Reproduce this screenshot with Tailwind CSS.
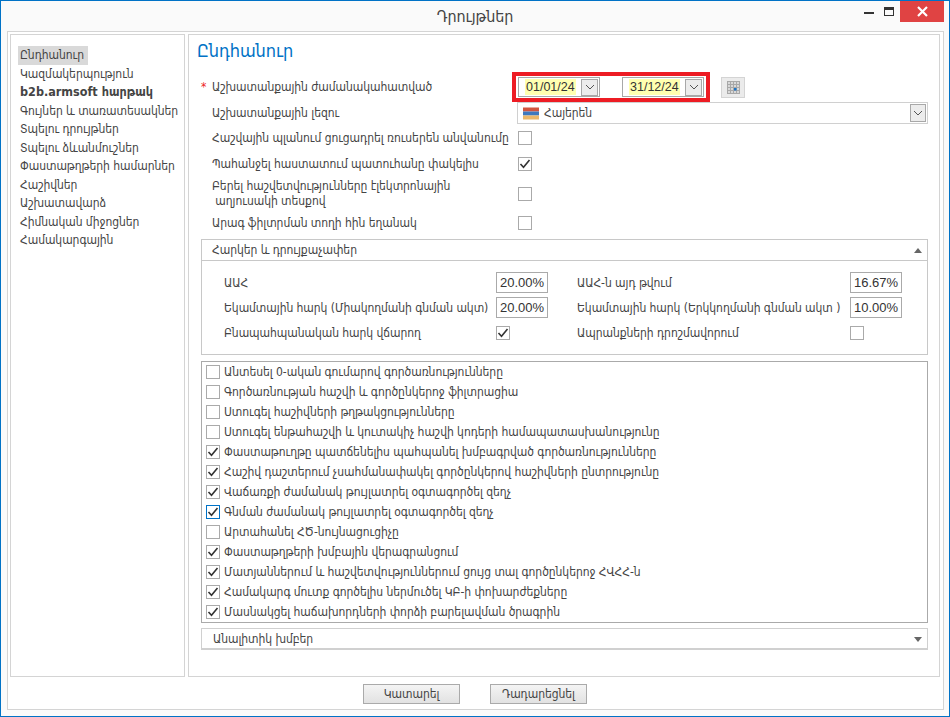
<!DOCTYPE html>
<html lang="hy">
<head>
<meta charset="UTF-8" />
<title>Դրույթներ</title>
<script src="https://cdn.jsdelivr.net/npm/@tailwindcss/browser@4"></script>
</head>
<body class="bg-white">
<div class="w-[950px] h-[717px] box-border border border-[#0072c6] bg-[#fafafa] overflow-hidden font-['DejaVu_Sans_Condensed','DejaVu_Sans',sans-serif] font-stretch-condensed text-[12px] tracking-[-0.06px] text-[#444]">

  <!-- title bar -->
  <div class="relative h-[30px] flex items-center justify-center pt-[1px] text-[16px] text-[#444]">
    <span>Դրույթներ</span>
    <div class="absolute right-[5px] top-0 flex items-start">
      <div class="w-[10px] h-[2px] bg-[#333] mt-[11px] mr-[10px]"></div>
      <div class="w-[10px] h-[9px] box-border border border-t-[3px] border-[#333] mt-[6px] mr-[6px]"></div>
      <div class="w-[44px] h-[21px] bg-[#e04343] flex items-center justify-center">
        <svg width="11" height="11" viewBox="0 0 11 11"><path d="M1 1l9 9M10 1l-9 9" stroke="#fff" stroke-width="2.2" fill="none"/></svg>
      </div>
    </div>
  </div>

  <!-- outer panel -->
  <div class="ml-[6px] w-[937px] h-[679px] box-border border border-[#d4d4d4] bg-white p-[2px]">
    <div class="flex gap-[3px] h-[643px]">

      <!-- sidebar -->
      <div class="w-[175px] box-border border border-[#d4d4d4] pl-[7px] pt-[11px] leading-[18.5px]">
        <div class="w-[70px] bg-[#d9d9d9] pl-[2px]">Ընդհանուր</div>
        <div class="pl-[2px]">Կազմակերպություն</div>
        <div class="pl-[2px] font-bold text-[12.5px] tracking-normal">b2b.armsoft հարթակ</div>
        <div class="pl-[2px]">Գույներ և տառատեսակներ</div>
        <div class="pl-[2px]">Տպելու դրույթներ</div>
        <div class="pl-[2px]">Տպելու ձևանմուշներ</div>
        <div class="pl-[2px]">Փաստաթղթերի համարներ</div>
        <div class="pl-[2px]">Հաշիվներ</div>
        <div class="pl-[2px]">Աշխատավարձ</div>
        <div class="pl-[2px]">Հիմնական միջոցներ</div>
        <div class="pl-[2px]">Համակարգային</div>
      </div>

      <!-- main -->
      <div class="w-[752px] box-border border border-[#d4d4d4] pl-[12px]">
        <div class="h-[22px] mt-[5px] mb-[10px] -ml-[4px] text-[18px] leading-[22px] text-[#0072c6]">Ընդհանուր</div>

        <div class="flex h-[30px]">
          <div class="w-[316px] flex items-center"><span class="w-[11px] text-[#ed1c24]">*</span><span>Աշխատանքային ժամանակահատված</span></div>
          <div class="-ml-[5px] w-[198px] box-border border-[4px] border-[#ed1c24] flex items-center px-[2px] justify-between">
            <div class="w-[82px] h-[20px] box-border border border-[#a8a8a8] flex items-center justify-between pl-[6px] pr-[1px]">
              <span class="bg-[#ffffb0] px-[1px] leading-[16px] font-['Liberation_Sans',sans-serif] font-stretch-normal tracking-normal text-[12.5px] text-[#333]">01/01/24</span>
              <div class="w-[17px] h-[17px] box-border border border-[#a8a8a8] bg-[#ececec] flex items-center justify-center">
                <svg width="10" height="7" viewBox="0 0 10 7"><path d="M1 1l4 4 4-4" stroke="#555" fill="none"/></svg>
              </div>
            </div>
            <div class="w-[82px] h-[20px] box-border border border-[#a8a8a8] flex items-center justify-between pl-[6px] pr-[1px]">
              <span class="bg-[#ffffb0] px-[1px] leading-[16px] font-['Liberation_Sans',sans-serif] font-stretch-normal tracking-normal text-[12.5px] text-[#333]">31/12/24</span>
              <div class="w-[17px] h-[17px] box-border border border-[#a8a8a8] bg-[#ececec] flex items-center justify-center">
                <svg width="10" height="7" viewBox="0 0 10 7"><path d="M1 1l4 4 4-4" stroke="#555" fill="none"/></svg>
              </div>
            </div>
          </div>
          <div class="ml-[11px] mt-[5px] w-[24px] h-[21px] box-border border border-[#d4d4d4] bg-[#ebebeb] flex items-center justify-center">
            <svg width="13" height="13" viewBox="0 0 13 13">
              <rect width="13" height="13" fill="#d8d8d8"/>
              <path d="M0.5 0v13M3.5 0v13M6.5 0v13M9.5 0v13M12.5 0v13M0 0.5h13M0 3.5h13M0 6.5h13M0 9.5h13M0 12.5h13" stroke="#a8a8a8"/>
              <rect x="7" y="7" width="2.5" height="2.5" fill="#1a75c9"/>
            </svg>
          </div>
        </div>

        <div class="flex h-[22px]">
          <div class="w-[316px] pl-[11px] flex items-center">Աշխատանքային լեզու</div>
          <div class="w-[411px] box-border border border-[#d0d0d0] flex items-center pl-[5px] pr-[1px]">
            <svg width="16" height="13" viewBox="0 0 16 12" class="mr-[5px]"><rect width="16" height="4" fill="#d1553f"/><rect y="4" width="16" height="4" fill="#3f78bd"/><rect y="8" width="16" height="4" fill="#ecb768"/></svg>
            <span>Հայերեն</span>
            <div class="ml-auto w-[16px] h-[18px] box-border border border-[#a8a8a8] bg-[#ececec] flex items-center justify-center">
              <svg width="10" height="7" viewBox="0 0 10 7"><path d="M1 1l4 4 4-4" stroke="#555" fill="none"/></svg>
            </div>
          </div>
        </div>

        <div class="flex items-center h-[24px] mt-[2px]">
          <div class="w-[317px] pl-[11px]">Հաշվային պլանում ցուցադրել ռուսերեն անվանումը</div>
          <div class="w-[14px] h-[14px] box-border border border-[#aaa]"></div>
        </div>
        <div class="flex items-center h-[24px] mt-[2px]">
          <div class="w-[317px] pl-[11px]">Պահանջել հաստատում պատուհանը փակելիս</div>
          <div class="w-[14px] h-[14px] box-border border border-[#aaa] flex items-center justify-center">
            <svg width="12" height="10" viewBox="0 0 12 10"><path d="M1.5 5l3 3.2L10.5 1" stroke="#333" stroke-width="1.6" fill="none"/></svg>
          </div>
        </div>
        <div class="flex items-center h-[34px] mt-[1px]">
          <div class="w-[317px] pl-[11px] leading-[15px]">Բերել հաշվետվությունները էլեկտրոնային<br />&nbsp;աղյուսակի տեսքով</div>
          <div class="w-[14px] h-[14px] box-border border border-[#aaa]"></div>
        </div>
        <div class="flex items-center h-[22px] mt-[1px]">
          <div class="w-[317px] pl-[11px]">Արագ ֆիլտրման տողի հին եղանակ</div>
          <div class="w-[14px] h-[14px] box-border border border-[#aaa]"></div>
        </div>

        <!-- tax panel -->
        <div class="mt-[5px] w-[727px] h-[116px] box-border border border-[#c8c8c8]">
          <div class="h-[21px] box-border border-b border-[#c8c8c8] flex items-center justify-between pl-[10px] pr-[5px]">
            <span>Հարկեր և դրույքաչափեր</span>
            <div class="w-0 h-0 border-x-[4px] border-x-transparent border-b-[5px] border-b-[#666]"></div>
          </div>
          <div class="grid grid-cols-[272px_81px_273px_52px] auto-rows-[21px] gap-y-[4px] pl-[22px] pt-[11px] items-center">
            <div>ԱԱՀ</div>
            <div class="col-start-2 w-[52px] h-[21px] box-border border border-[#aaa] flex items-center justify-center font-['Liberation_Sans',sans-serif] font-stretch-normal tracking-normal text-[13px] text-[#333]">20.00%</div>
            <div>ԱԱՀ-ն այդ թվում</div>
            <div class="w-[52px] h-[21px] box-border border border-[#aaa] flex items-center justify-center font-['Liberation_Sans',sans-serif] font-stretch-normal tracking-normal text-[13px] text-[#333]">16.67%</div>
            <div>Եկամտային հարկ (Միակողմանի գնման ակտ)</div>
            <div class="w-[52px] h-[21px] box-border border border-[#aaa] flex items-center justify-center font-['Liberation_Sans',sans-serif] font-stretch-normal tracking-normal text-[13px] text-[#333]">20.00%</div>
            <div>Եկամտային հարկ (Երկկողմանի գնման ակտ )</div>
            <div class="w-[52px] h-[21px] box-border border border-[#aaa] flex items-center justify-center font-['Liberation_Sans',sans-serif] font-stretch-normal tracking-normal text-[13px] text-[#333]">10.00%</div>
            <div>Բնապահպանական հարկ վճարող</div>
            <div class="w-[14px] h-[14px] box-border border border-[#aaa] flex items-center justify-center">
              <svg width="12" height="10" viewBox="0 0 12 10"><path d="M1.5 5l3 3.2L10.5 1" stroke="#333" stroke-width="1.6" fill="none"/></svg>
            </div>
            <div>Ապրանքների դրոշմավորում</div>
            <div class="w-[14px] h-[14px] box-border border border-[#aaa]"></div>
          </div>
        </div>

        <!-- options list -->
        <div class="mt-[6px] w-[727px] h-[262px] box-border border border-[#aaa] pl-[4px] leading-[20px]">
          <div class="flex items-center gap-[4px] h-[20px]"><div class="w-[14px] h-[14px] box-border border border-[#aaa]"></div><span>Անտեսել 0-ական գումարով գործառնությունները</span></div>
          <div class="flex items-center gap-[4px] h-[20px]"><div class="w-[14px] h-[14px] box-border border border-[#aaa]"></div><span>Գործառնության հաշվի և գործընկերոջ ֆիլտրացիա</span></div>
          <div class="flex items-center gap-[4px] h-[20px]"><div class="w-[14px] h-[14px] box-border border border-[#aaa]"></div><span>Ստուգել հաշիվների թղթակցությունները</span></div>
          <div class="flex items-center gap-[4px] h-[20px]"><div class="w-[14px] h-[14px] box-border border border-[#aaa]"></div><span>Ստուգել ենթահաշվի և կուտակիչ հաշվի կոդերի համապատասխանությունը</span></div>
          <div class="flex items-center gap-[4px] h-[20px]"><div class="w-[14px] h-[14px] box-border border border-[#aaa] flex items-center justify-center"><svg width="12" height="10" viewBox="0 0 12 10"><path d="M1.5 5l3 3.2L10.5 1" stroke="#333" stroke-width="1.6" fill="none"/></svg></div><span>Փաստաթուղթը պատճենելիս պահպանել խմբագրված գործառնությունները</span></div>
          <div class="flex items-center gap-[4px] h-[20px]"><div class="w-[14px] h-[14px] box-border border border-[#aaa] flex items-center justify-center"><svg width="12" height="10" viewBox="0 0 12 10"><path d="M1.5 5l3 3.2L10.5 1" stroke="#333" stroke-width="1.6" fill="none"/></svg></div><span>Հաշիվ դաշտերում չսահմանափակել գործընկերով հաշիվների ընտրությունը</span></div>
          <div class="flex items-center gap-[4px] h-[20px]"><div class="w-[14px] h-[14px] box-border border border-[#aaa] flex items-center justify-center"><svg width="12" height="10" viewBox="0 0 12 10"><path d="M1.5 5l3 3.2L10.5 1" stroke="#333" stroke-width="1.6" fill="none"/></svg></div><span>Վաճառքի ժամանակ թույլատրել օգտագործել զեղչ</span></div>
          <div class="flex items-center gap-[4px] h-[20px]"><div class="w-[14px] h-[14px] box-border border border-[#0072c6] flex items-center justify-center"><svg width="12" height="10" viewBox="0 0 12 10"><path d="M1.5 5l3 3.2L10.5 1" stroke="#333" stroke-width="1.6" fill="none"/></svg></div><span>Գնման ժամանակ թույլատրել օգտագործել զեղչ</span></div>
          <div class="flex items-center gap-[4px] h-[20px]"><div class="w-[14px] h-[14px] box-border border border-[#aaa]"></div><span>Արտահանել ՀԾ-նույնացուցիչը</span></div>
          <div class="flex items-center gap-[4px] h-[20px]"><div class="w-[14px] h-[14px] box-border border border-[#aaa] flex items-center justify-center"><svg width="12" height="10" viewBox="0 0 12 10"><path d="M1.5 5l3 3.2L10.5 1" stroke="#333" stroke-width="1.6" fill="none"/></svg></div><span>Փաստաթղթերի խմբային վերագրանցում</span></div>
          <div class="flex items-center gap-[4px] h-[20px]"><div class="w-[14px] h-[14px] box-border border border-[#aaa] flex items-center justify-center"><svg width="12" height="10" viewBox="0 0 12 10"><path d="M1.5 5l3 3.2L10.5 1" stroke="#333" stroke-width="1.6" fill="none"/></svg></div><span>Մատյաններում և հաշվետվություններում ցույց տալ գործընկերոջ ՀՎՀՀ-ն</span></div>
          <div class="flex items-center gap-[4px] h-[20px]"><div class="w-[14px] h-[14px] box-border border border-[#aaa] flex items-center justify-center"><svg width="12" height="10" viewBox="0 0 12 10"><path d="M1.5 5l3 3.2L10.5 1" stroke="#333" stroke-width="1.6" fill="none"/></svg></div><span>Համակարգ մուտք գործելիս ներմուծել ԿԲ-ի փոխարժեքները</span></div>
          <div class="flex items-center gap-[4px] h-[20px]"><div class="w-[14px] h-[14px] box-border border border-[#aaa] flex items-center justify-center"><svg width="12" height="10" viewBox="0 0 12 10"><path d="M1.5 5l3 3.2L10.5 1" stroke="#333" stroke-width="1.6" fill="none"/></svg></div><span>Մասնակցել հաճախորդների փորձի բարելավման ծրագրին</span></div>
        </div>

        <div class="mt-[5px] w-[727px] h-[22px] box-border border border-[#d0d0d0] border-b-2 flex items-center justify-between pl-[11px] pr-[5px] pt-[1px]">
          <span>Անալիտիկ խմբեր</span>
          <div class="w-0 h-0 border-x-[4px] border-x-transparent border-t-[5px] border-t-[#666]"></div>
        </div>
      </div>
    </div>

    <!-- footer -->
    <div class="flex pl-[353px] pt-[7px]">
      <button class="w-[97px] h-[20px] box-border border border-[#aaa] bg-gradient-to-b from-[#f4f4f4] to-[#e2e2e2] text-[#444] text-[12px] leading-none">Կատարել</button>
      <button class="ml-[30px] w-[97px] h-[20px] box-border border border-[#aaa] bg-gradient-to-b from-[#f4f4f4] to-[#e2e2e2] text-[#444] text-[12px] leading-none">Դադարեցնել</button>
    </div>
  </div>
</div>
</body>
</html>
